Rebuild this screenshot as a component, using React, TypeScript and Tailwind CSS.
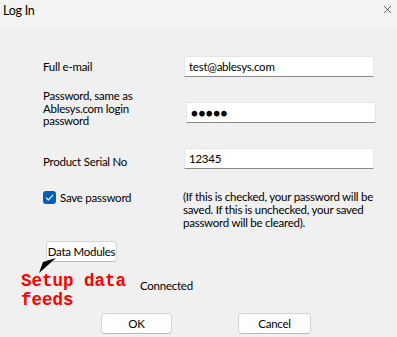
import { X } from "lucide-react";

function Field({
  value,
  className = "",
}: {
  value: string;
  className?: string;
}) {
  return (
    <div
      className={`flex h-[21px] w-[190px] items-center rounded-t-[2px] border border-[#e5e5e5] border-b-[#8a8a8a] bg-white pl-[4px] text-[11.5px] leading-[13px] text-black ${className}`}
    >
      {value}
    </div>
  );
}

function Button({ label, className = "" }: { label: string; className?: string }) {
  return (
    <button
      type="button"
      className={`flex h-[21px] shrink-0 items-center justify-center whitespace-nowrap rounded-[4px] border border-[#d4d4d4] border-b-[#bdbdbd] bg-[#fdfdfd] text-[11.5px] leading-[13px] tracking-[-0.25px] text-black ${className}`}
    >
      {label}
    </button>
  );
}

export default function App() {
  return (
    <div
      className="relative h-[337px] w-[397px] overflow-hidden bg-[#f0f0f0] text-[11.5px] leading-[13px] tracking-[-0.25px] text-black"
      style={{ fontFamily: 'Lato, "Noto Sans", sans-serif' }}
    >
      <div className="flex h-[27px] items-start justify-between bg-[#f3f3f3] pl-[3px] pr-[3px] pt-[4px]">
        <span className="text-[12.5px] leading-[14px]">Log In</span>
        <X size={13} strokeWidth={1.3} className="mt-[-1px] text-[#222]" />
      </div>

      <div className="flex flex-col pl-[43px]">
        <div className="mt-[29px] flex h-[21px] items-center">
          <span className="w-[141px] shrink-0 whitespace-nowrap">Full e-mail</span>
          <Field value="test@ablesys.com" />
        </div>

        <div className="mt-[13px] flex h-[40px] items-start">
          <span className="w-[141px] shrink-0 whitespace-nowrap leading-[12.5px]">
            Password, same as
            <br />
            Ablesys.com login
            <br />
            password
          </span>
          <Field
            value="●●●●●"
            className="ml-[2px] mt-[12px] text-[10px] tracking-[0.5px]"
          />
        </div>

        <div className="mt-[18px] flex h-[22px] items-start">
          <span className="w-[141px] shrink-0 whitespace-nowrap pt-[7px]">Product Serial No</span>
          <Field value="12345" />
        </div>

        <div className="mt-[20px] flex h-[39px] items-start">
          <div className="flex w-[140px] shrink-0 items-center pt-[1px]">
            <span className="flex h-[13px] w-[13px] items-center justify-center rounded-[3px] bg-[#005fb8]">
              <svg width="9" height="7" viewBox="0 0 9 7" fill="none">
                <path d="M1 3.6 L3.4 6 L8 1" stroke="white" strokeWidth="1.2" />
              </svg>
            </span>
            <span className="ml-[4px] whitespace-nowrap">Save password</span>
          </div>
          <p className="whitespace-nowrap">
            (If this is checked, your password will be
            <br />
            saved. If this is unchecked, your saved
            <br />
            password will be cleared).
          </p>
        </div>

        <div className="mt-[12px] flex">
          <Button label="Data Modules" className="ml-[3px] w-[71px]" />
        </div>

        <div className="mt-[10px] flex h-[38px] items-start">
          <p
            className="ml-[-22px] w-[119px] shrink-0 whitespace-nowrap text-[17.5px] font-bold leading-[19px] tracking-[0px] text-[#ff0000]"
            style={{ fontFamily: '"Liberation Mono", monospace' }}
          >
            Setup data
            <br />
            feeds
          </p>
          <span className="pt-[7px]">Connected</span>
        </div>

        <div className="mt-[3px] flex">
          <Button label="OK" className="ml-[58px] w-[71px]" />
          <Button label="Cancel" className="ml-[66px] w-[73px]" />
        </div>
      </div>

      <svg
        className="absolute left-0 top-0"
        width="397"
        height="337"
        viewBox="0 0 397 337"
      >
        <polygon points="43,262 56,258 39,273" fill="black" />
      </svg>
    </div>
  );
}
